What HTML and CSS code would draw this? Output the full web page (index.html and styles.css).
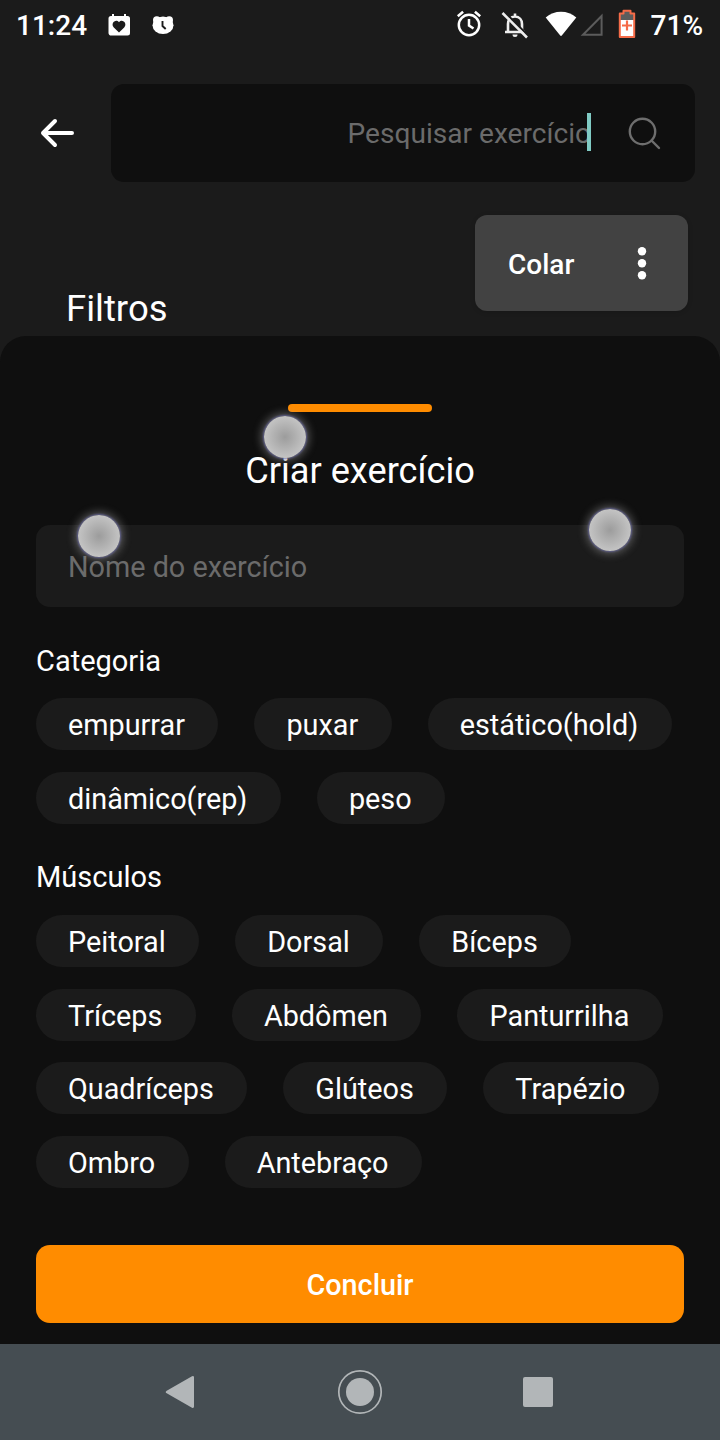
FILE: index.html
```html
<!DOCTYPE html>
<html lang="pt-BR">
<head>
<meta charset="utf-8">
<title>Criar exercício</title>
<link rel="stylesheet" href="styles.css">
</head>
<body>
<div class="screen">
  <header class="status">
    <span class="clock">11:24</span>
    <svg class="s-cal" width="24" height="24" viewBox="0 0 24 24"><path fill="#fff" fill-rule="evenodd" d="M5 1h2v2h10V1h2v2h1.500a2.500 2.500 0 0 1 2.500 2.500V20a2.500 2.500 0 0 1-2.500 2.500h-16A2.500 2.500 0 0 1 1.500 20V5.500A2.500 2.500 0 0 1 4 3h1zM12 19.500l5.200-5c3.600-3.800-1.700-9.200-5.200-5.300-3.500-3.900-8.800 1.500-5.200 5.300z"/></svg>
    <svg class="s-bear" width="22" height="20" viewBox="0 0 22 20"><g fill="#fff"><circle cx="4.800" cy="5" r="3.800"/><circle cx="17.200" cy="5" r="3.800"/><ellipse cx="11" cy="10.300" rx="10.500" ry="8.700"/></g><path d="M10.500 6v5l3.200 3" fill="none" stroke="#1b1b1b" stroke-width="1.900"/></svg>
    <span class="spacer"></span>
    <svg class="s-alarm" width="26" height="28" viewBox="0 0 26 28"><g fill="none" stroke="#fff" stroke-width="2.500"><circle cx="13" cy="15" r="10.200"/><path d="M13 9v6.500l4.500 3M1.800 6.200l5.300-4.500M24.200 6.200l-5.300-4.500"/></g></svg>
    <svg class="s-bell" width="28" height="28" viewBox="0 0 28 28"><g fill="none" stroke="#eee" stroke-width="2.600"><path d="M4 21h20M7 21v-8c0-4 2.500-7.500 7-7.500s7 3.500 7 7.500v8M14 5.500V2.500"/></g><path d="M11.500 23.500h5a2.500 2.500 0 0 1-5 0z" fill="#eee"/><path d="M3.200 0.700l25 25" stroke="#1b1b1b" stroke-width="2.200"/><path d="M1.500 2l24.500 24.500" stroke="#eee" stroke-width="2.600"/></svg>
    <svg class="s-wifi" width="32" height="26" viewBox="0 0 32 26"><path d="M.7 6.500C9-1.200 23-1.200 31.300 6.500L17 24.300q-1 1.200-2 0z" fill="#fff"/></svg>
    <svg class="s-cell" width="24" height="24" viewBox="0 0 24 24"><path d="M21.600 3v18.800H3z" fill="none" stroke="#5c5c5c" stroke-width="2"/></svg>
    <svg class="s-bat" width="18" height="30" viewBox="0 0 18 30"><path d="M5.500 2h7v2.500H16V28H2V4.500h3.500z" fill="#fff"/><path d="M5.500 2h7v2.500H16V11H2V4.500h3.500z" fill="#5d5d5d"/><path d="M5.500 1.800h7v2.700h3.700V28H1.800V4.500h3.700z" fill="none" stroke="#f56b48" stroke-width="2" stroke-linejoin="round"/><path d="M9 11.500v10M4 16.500h10" stroke="#f56b48" stroke-width="2.200"/></svg>
    <span class="percent">71%</span>
  </header>

  <div class="topbar">
    <svg class="back" width="36" height="32" viewBox="0 0 36 32"><path d="M33 16H4M16 4L4 16l12 12" fill="none" stroke="#fff" stroke-width="4" stroke-linecap="round" stroke-linejoin="round"/></svg>
    <div class="search">
      <span class="search-text">Pesquisar exercício<i class="caret"></i></span>
      <svg width="34" height="34" viewBox="0 0 34 34"><g fill="none" stroke="#6e6e6e" stroke-width="2.400" stroke-linecap="round"><circle cx="15.500" cy="15.500" r="12.700"/><path d="M24.500 24.500l7.500 7.500"/></g></svg>
    </div>
  </div>

  <div class="filters">
    <h2>Filtros</h2>
    <div class="paste">
      <span>Colar</span>
      <svg width="10" height="34" viewBox="0 0 10 34" fill="#fff"><circle cx="5" cy="4.200" r="4.200"/><circle cx="5" cy="16.200" r="4.200"/><circle cx="5" cy="28.200" r="4.200"/></svg>
    </div>
  </div>

  <main class="sheet">
    <div class="handle"></div>
    <h1>Criar exercício</h1>
    <div class="name-field">Nome do exercício</div>

    <h3 class="cat-title">Categoria</h3>
    <div class="chips">
      <span class="chip">empurrar</span><span class="chip">puxar</span><span class="chip">estático(hold)</span>
      <span class="chip">dinâmico(rep)</span><span class="chip">peso</span>
    </div>

    <h3 class="mus-title">Músculos</h3>
    <div class="chips muscles">
      <span class="chip">Peitoral</span><span class="chip">Dorsal</span><span class="chip">Bíceps</span>
      <span class="chip">Tríceps</span><span class="chip">Abdômen</span><span class="chip">Panturrilha</span>
      <span class="chip">Quadríceps</span><span class="chip">Glúteos</span><span class="chip">Trapézio</span>
      <span class="chip">Ombro</span><span class="chip">Antebraço</span>
    </div>
    <div class="submit">Concluir</div>
  </main>

  <nav class="navbar">
    <svg width="44" height="48" viewBox="0 0 44 48"><path d="M7.700 22.700L33 8.300q2-.8 2 1.200v29q0 2-2 1.200L7.700 25.300q-2-1.300 0-2.600z" fill="#b2b6b8"/></svg>
    <svg width="48" height="48" viewBox="0 0 48 48"><circle cx="24" cy="24" r="21.200" fill="none" stroke="#b2b6b8" stroke-width="1.700"/><circle cx="24" cy="24" r="14" fill="#b2b6b8"/></svg>
    <svg width="44" height="48" viewBox="0 0 44 48"><rect x="6" y="9" width="30" height="30" rx="2" fill="#b2b6b8"/></svg>
  </nav>

  <i class="touch touch-a"></i>
  <i class="touch touch-b"></i>
  <i class="touch touch-c"></i>
</div>
</body>
</html>
```
FILE: styles.css
```css
* { box-sizing: border-box; }
body { margin: 0; background: #1b1b1b; }
h1, h2, h3 { margin: 0; font-weight: 400; }
svg { display: block; flex: none; }

.screen {
  position: relative;
  width: 720px;
  height: 1440px;
  display: flex;
  flex-direction: column;
  background: #1b1b1b;
  color: #fff;
  font-family: Roboto, "Noto Sans", sans-serif;
  font-size: 28.800px;
  overflow: hidden;
}

.status {
  height: 50px;
  padding: 0 17px 0 16px;
  display: flex;
  align-items: center;
  font-size: 28px;
  font-weight: 500;
}
.spacer { flex: 1; }
.s-cal { margin-left: 20px; margin-top: -1px; }
.s-bear { margin-left: 21px; margin-top: -1px; }
.s-alarm { margin-top: -2px; }
.s-bell { margin-left: 19px; margin-top: -1px; }
.s-wifi { margin-left: 16px; margin-top: -2px; }
.s-cell { margin-left: 3px; }
.s-bat { margin-left: 14px; margin-top: -2px; }
.percent { margin-left: 15px; }

.topbar {
  margin-top: 34px;
  height: 98px;
  padding: 0 25px 0 39px;
  display: flex;
  align-items: center;
}
.search {
  flex: 1;
  height: 98px;
  margin-left: 36px;
  padding-right: 34px;
  display: flex;
  align-items: center;
  justify-content: flex-end;
  border-radius: 13px;
  background: #0f0f0f;
}
.search-text { position: relative; margin-right: 36px; font-size: 28.100px; color: #6b6b6b; }
.caret {
  position: absolute;
  right: 0;
  top: -4px;
  width: 4px;
  height: 38px;
  background: #80cbc4;
}

.filters {
  height: 154px;
  padding: 33px 32px 0 66px;
  display: flex;
  justify-content: space-between;
}
.filters h2 { margin-top: 73px; font-size: 36.500px; line-height: 42px; }
.paste {
  width: 213px;
  height: 96px;
  padding: 2px 41px 0 33px;
  display: flex;
  align-items: center;
  justify-content: space-between;
  border-radius: 12px;
  background: #424242;
  font-size: 28px;
  font-weight: 500;
  box-shadow: 0 1px 5px rgba(0, 0, 0, .15);
}

.sheet {
  height: 1008px;
  padding: 68px 36px 0;
  border-radius: 26px 26px 0 0;
  background: #0f0f0f;
}
.handle { width: 144px; height: 8px; margin: 0 auto; border-radius: 4px; background: #ff8c00; }
.sheet h1 { margin-top: 38px; font-size: 36.200px; line-height: 42px; text-align: center; }
.name-field {
  height: 82px;
  margin-top: 33px;
  padding: 1px 32px 0;
  display: flex;
  align-items: center;
  border-radius: 14px;
  background: #1b1b1b;
  color: #6b6b6b;
}
.sheet h3 { font-size: 29px; line-height: 34px; }
.cat-title { margin-top: 37px; }
.mus-title { margin-top: 36px; }
.chips { margin-top: 20px; display: flex; flex-wrap: wrap; gap: 21.700px 36px; }
.muscles { margin-top: 21.300px; }
.chip {
  height: 52px;
  padding: 1px 33.500px 0 32px;
  line-height: 53px;
  border-radius: 26px;
  background: #1b1b1b;
  white-space: nowrap;
}
.submit {
  height: 78px;
  margin-top: 56.600px;
  padding-top: 1px;
  line-height: 78px;
  border-radius: 14px;
  background: #ff8c00;
  font-weight: 500;
  text-align: center;
}

.navbar {
  height: 96px;
  padding: 0 159px;
  display: flex;
  align-items: center;
  justify-content: space-between;
  background: #454d52;
}

.touch {
  position: absolute;
  width: 42px;
  height: 42px;
  border-radius: 50%;
  background: radial-gradient(circle closest-side, #9c9c9c 0%, #c4c4c4 100%);
  box-shadow: 0 0 2px 1px rgba(105, 105, 165, .8), 0 0 9px 3px rgba(170, 170, 170, .45);
}
.touch-a { left: 264px; top: 416px; }
.touch-b { left: 78px; top: 515px; }
.touch-c { left: 589px; top: 509px; }
```
